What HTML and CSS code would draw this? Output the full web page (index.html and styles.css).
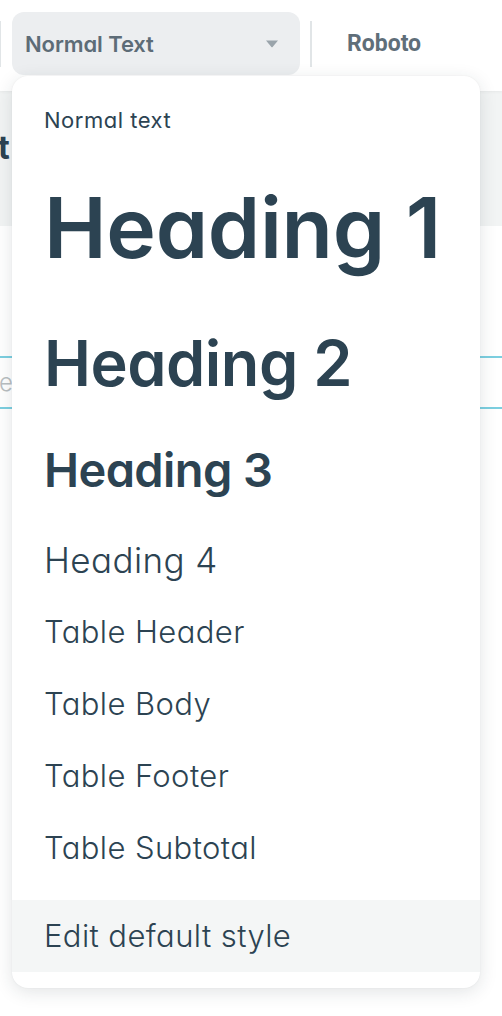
FILE: index.html
```html
<!DOCTYPE html>
<html lang="en">
<head>
<meta charset="utf-8">
<title>Text styles</title>
<link rel="stylesheet" href="styles.css">
</head>
<body>
<div class="toolbar">
  <span class="sep sep-left"></span>
  <button class="style-btn">
    <span class="style-label">Normal Text</span>
    <svg class="caret" width="14" height="8" viewBox="0 0 14 8"><path d="M1 0.5 H13 L7.6 7 Q7 7.6 6.4 7 Z" fill="#9aa4ab"/></svg>
  </button>
  <span class="sep"></span>
  <span class="font-name">Roboto</span>
</div>
<div class="editor">
  <div class="title-band"><span class="title-frag">t</span></div>
  <div class="body-area">
    <div class="input-line"><span class="placeholder">e</span></div>
  </div>
</div>

<div class="menu">
  <div class="item i-normal">Normal text</div>
  <div class="item i-h1">Heading 1</div>
  <div class="item i-h2">Heading 2</div>
  <div class="item i-h3">Heading 3</div>
  <div class="item i-h4">Heading 4</div>
  <div class="item i-table">Table Header</div>
  <div class="item i-table">Table Body</div>
  <div class="item i-table">Table Footer</div>
  <div class="item i-table">Table Subtotal</div>
  <div class="menu-footer">
    <div class="item i-table i-edit">Edit default style</div>
  </div>
</div>
</body>
</html>
```

FILE: styles.css
```css
* { box-sizing: border-box; }
html, body { margin: 0; padding: 0; }
body {
  width: 502px;
  height: 1016px;
  overflow: hidden;
  background: #ffffff;
  font-family: Inter, "Noto Sans", sans-serif;
  font-feature-settings: "cv11" 1;
  color: #2c4352;
  position: relative;
}

.toolbar {
  height: 91px;
  padding-bottom: 4px;
  display: flex;
  align-items: center;
  background: #ffffff;
  position: relative;
  z-index: 1;
  box-shadow: 0 1px 3px rgba(0,0,0,0.05);
}
.sep {
  width: 2px;
  height: 46px;
  background: #e1e5e7;
  flex: none;
}
.sep-left { margin-left: -1px; }
.style-btn {
  margin-left: 11px;
  width: 288px;
  height: 63px;
  border: 0;
  border-radius: 12px;
  background: #eceef0;
  display: flex;
  align-items: center;
  justify-content: space-between;
  padding: 0 21px 0 13px;
  font-family: inherit;
  font-feature-settings: "cv11" 1;
  cursor: pointer;
  margin-right: 10px;
}
.style-label {
  font-size: 22px;
  font-weight: 600;
  color: #5d6c77;
  letter-spacing: -0.1px;
}
.caret { display: block; }
.font-name {
  margin-left: 35px;
  font-family: Roboto, sans-serif;
  font-weight: 700;
  font-size: 23px;
  color: #5f6e79;
}

.editor { background: #ffffff; }
.title-band {
  height: 135px;
  background: #f2f4f4;
  padding-top: 41px;
}
.title-frag {
  display: block;
  margin-left: -2px;
  font-size: 32px;
  font-weight: 700;
  line-height: 1;
  color: #2c4352;
}
.body-area { padding-top: 130px; }
.input-line {
  height: 53px;
  border-top: 2px solid #7ccfe0;
  border-bottom: 2px solid #7ccfe0;
  display: flex;
  align-items: center;
}
.placeholder {
  margin-left: -1px;
  font-size: 24px;
  color: #b9bec1;
  font-weight: 300;
}

.menu {
  position: absolute;
  top: 76px;
  left: 12px;
  width: 468px;
  height: 912px;
  background: #ffffff;
  border-radius: 16px;
  box-shadow: 0 4px 18px rgba(30, 45, 55, 0.13), 0 0 2px rgba(30,45,55,0.06);
  padding: 8px 0 16px;
  z-index: 2;
}
.item {
  display: flex;
  align-items: center;
  padding-left: 32px;
  height: 72px;
  line-height: 1.21;
  white-space: nowrap;
  color: #2c4352;
}
.i-normal { font-size: 22px; font-weight: 400; letter-spacing: 0.5px; }
.i-h1 { height: 143px; font-size: 84px; font-weight: 600; letter-spacing: -0.3px; }
.i-h2 { height: 128px; font-size: 63px; font-weight: 600; letter-spacing: -0.5px; }
.i-h3 { height: 97px; padding-bottom: 10px; font-size: 47px; font-weight: 600; letter-spacing: -0.6px; }
.i-h4 { font-size: 35px; font-weight: 300; letter-spacing: 0.4px; }
.i-table { font-size: 31px; font-weight: 300; letter-spacing: 0.4px; }
.menu-footer { margin-top: 16px; background: #f4f6f6; }
.i-edit { background: #f4f6f6; }
```
